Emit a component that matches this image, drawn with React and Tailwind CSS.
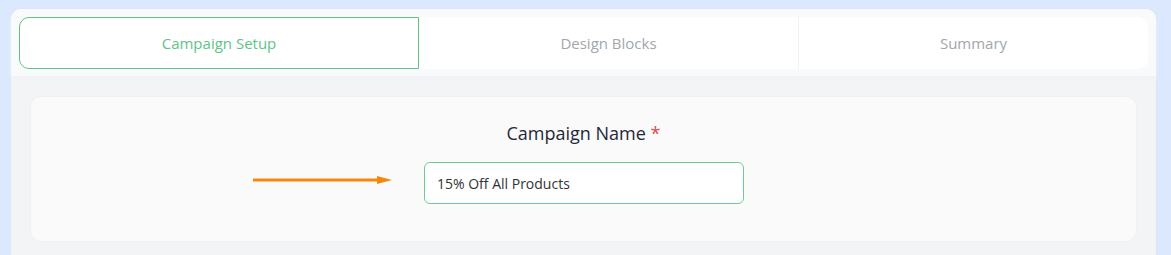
export default function App() {
  const tabs = [
    { label: "Campaign Setup", w: "w-[400px]", active: true },
    { label: "Design Blocks", w: "w-[380px]" },
    { label: "Summary", w: "flex-1" },
  ];

  return (
    <div className="min-h-[255px] h-[255px] overflow-hidden bg-[#dbe8fd] pt-[9px] px-[11px] pr-[15px] font-['Open_Sans',sans-serif]">
      <div className="rounded-t-[10px] bg-[#f3f4f6] h-[260px] shadow-[0_0_2px_rgba(0,0,0,0.04)]">
        {/* tabs */}
        <div className="bg-[#f9fafb] rounded-t-[10px] px-[8px] pt-[8px] pb-[7px] shadow-[0_3px_4px_rgba(240,242,245,0.9)]">
          <div className="flex h-[52px] bg-white rounded-[10px]">
            {tabs.map((t, i) => (
              <div
                key={t.label}
                className={`${t.w} flex items-center justify-center text-[15px] ${
                  t.active
                    ? "border border-[#5ec38a] text-[#5ec38a] rounded-l-[10px]"
                    : "text-[#a3a6ad] " + (i === 1 ? "border-r border-[#f0f1f3]" : "")
                }`}
              >
                {t.label}
              </div>
            ))}
          </div>
        </div>

        {/* body */}
        <div className="px-[20px] pt-[21px]">
          <div className="bg-[#fafafa] rounded-[10px] h-[144px] shadow-[0_0_3px_rgba(0,0,0,0.04)] flex flex-col items-center pt-[23px]">
            <div className="text-[18px] text-[#1f2937] leading-[26px]">
              Campaign Name <span className="text-[#e5484d]">*</span>
            </div>
            <div className="flex items-center mt-[16px] -ml-[170px]">
              <svg width="140" height="10" viewBox="0 0 140 10" className="mr-[31px] -mt-[6px]">
                <line x1="0" y1="5" x2="126" y2="5" stroke="#f5870a" strokeWidth="3" />
                <polygon points="124,1 139,5 124,9" fill="#f5870a" />
              </svg>
              <div className="w-[320px] h-[42px] border border-[#6ccb97] rounded-[6px] bg-white flex items-center px-[12px] text-[14px] text-[#333]">
                15% Off All Products
              </div>
            </div>
          </div>
        </div>
      </div>
    </div>
  );
}
